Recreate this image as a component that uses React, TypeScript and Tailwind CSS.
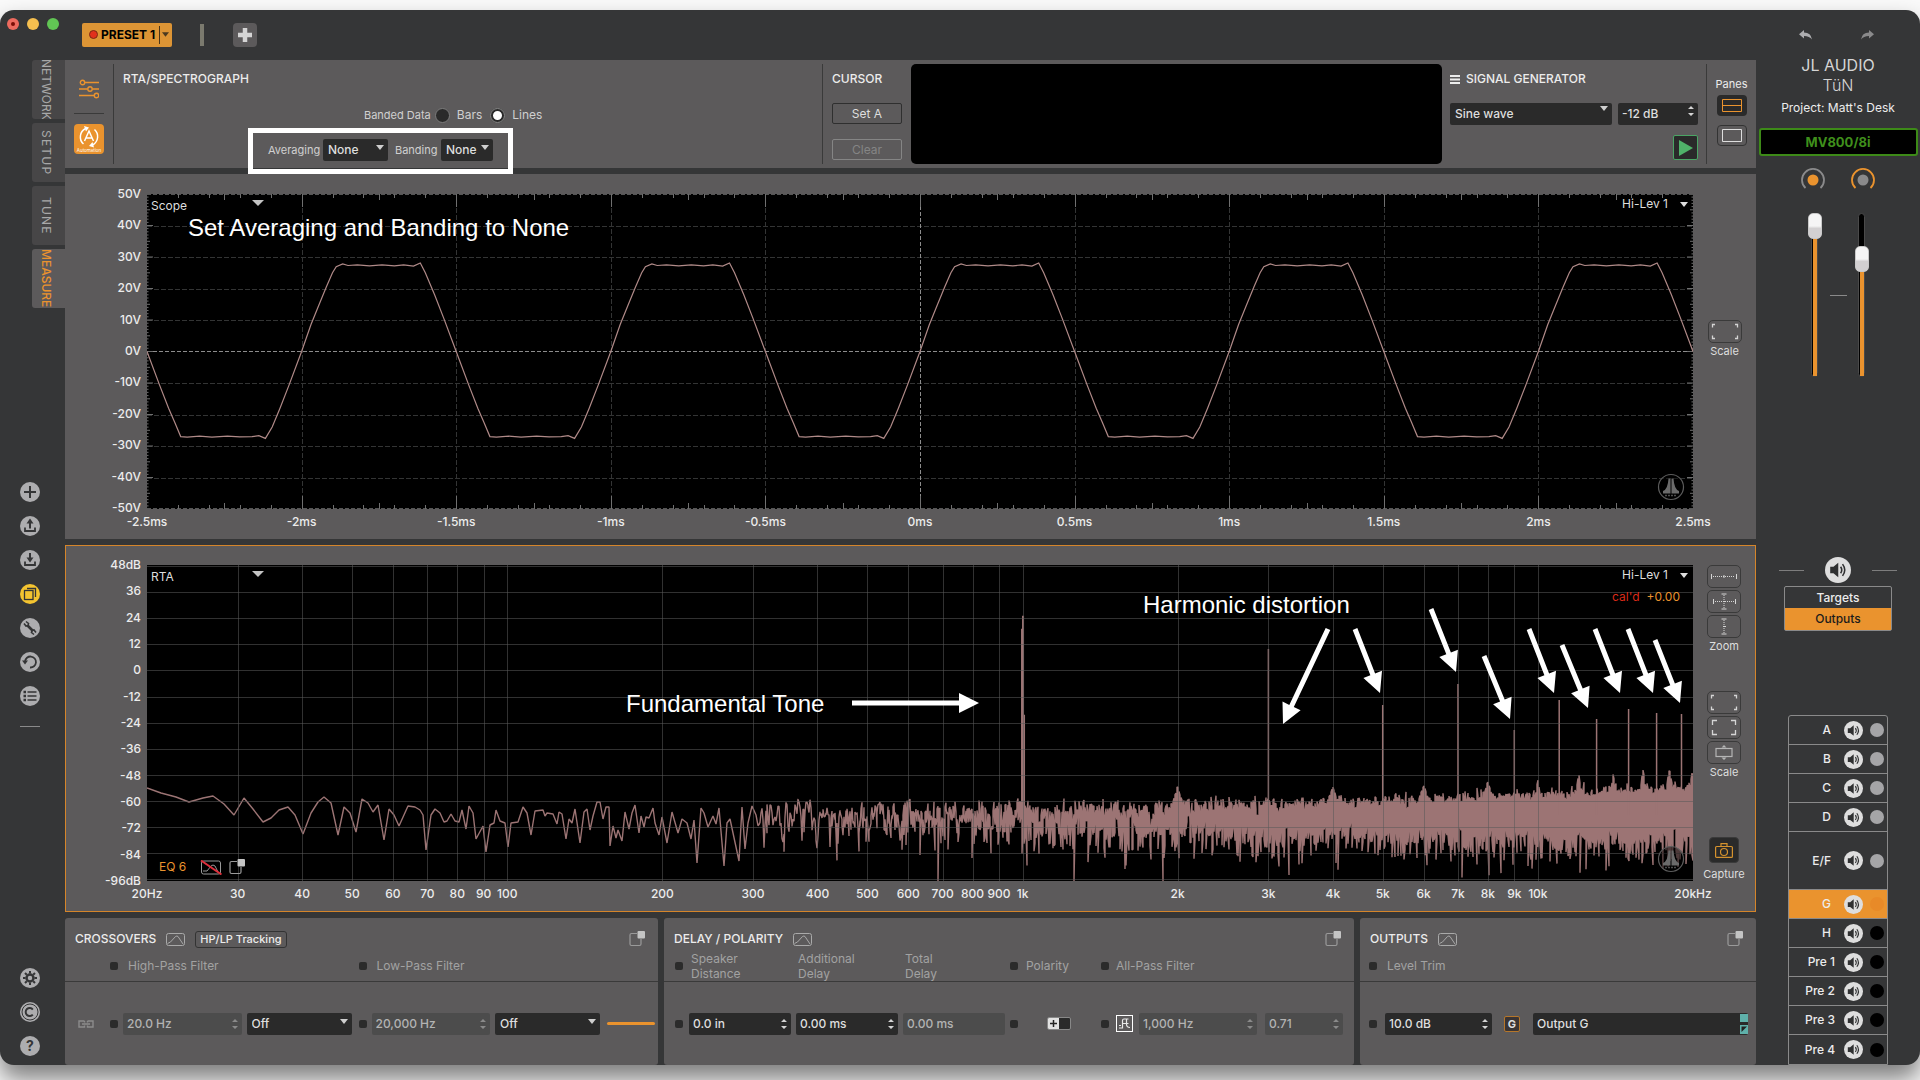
import React from "react";
import type { ReactNode } from "react";

const PINK = "#9c7474";

/* ---------- signal data ---------- */

const SCOPE_W = 1546;
const SCOPE_H = 315;
const RTA_W = 1546;
const RTA_H = 316;

const scopeX = (ms: number) => ((ms + 2.5) / 5) * SCOPE_W;
const scopeY = (v: number) => ((50 - v) / 100) * SCOPE_H;
const freqX = (f: number) => (Math.log10(f / 20) / 3) * RTA_W;
const dbY = (db: number) => 1 + ((48 - db) / 12) * 26.1;

const CYCLE: [number, number][] = [
  [0, 0], [0.03, 8.5], [0.055, 14.5], [0.08, 20.5], [0.1, 25], [0.112, 26.9], [0.133, 27.8], [0.15, 27.3],
  [0.18, 27.5], [0.22, 27.2], [0.26, 27.5], [0.3, 27.2], [0.33, 27.5], [0.362, 27.1], [0.384, 28.1],
  [0.4, 25], [0.43, 18], [0.46, 10.5], [0.5, 0], [0.54, -10.5], [0.57, -18], [0.59, -22.5], [0.609, -27],
  [0.63, -27.2], [0.67, -26.9], [0.71, -27.2], [0.76, -26.9], [0.8, -27.1], [0.84, -27], [0.862, -26.7],
  [0.883, -27.6], [0.905, -24], [0.93, -18], [0.96, -10.5],
];

function scopePath() {
  const pts: string[] = [];
  for (let c = -3; c <= 2; c++) {
    for (const [t, v] of CYCLE) {
      const ms = c + t;
      if (ms < -2.501 || ms > 2.501) continue;
      pts.push(`${scopeX(ms).toFixed(1)},${scopeY(v).toFixed(1)}`);
    }
  }
  return "M" + pts.join("L");
}

const LOW_TRACE: [number, number][] = [
  [0, 223], [14, 228], [29, 232], [42, 237], [56, 233], [66, 231], [77, 239], [87, 250], [97, 233], [106, 244],
  [116, 257], [124, 253], [132, 245], [141, 242], [148, 250], [156, 269], [164, 248], [171, 237], [177, 232],
  [184, 238], [191, 270], [197, 242], [203, 248], [209, 267], [215, 234], [221, 238], [226, 247], [231, 240],
  [237, 275], [242, 244], [247, 250], [252, 261], [261, 241], [268, 242], [273, 245], [276, 250], [279, 285],
  [284, 250], [288, 244], [293, 248], [297, 257], [300, 256], [304, 249], [308, 256], [312, 257], [315, 245],
  [319, 264], [322, 241], [326, 248], [329, 274], [336, 261], [339, 287], [343, 260], [347, 258], [349, 245],
  [353, 256], [358, 258], [361, 282], [364, 258], [371, 257], [376, 242], [380, 248], [384, 270], [388, 246],
  [396, 245], [398, 251], [400, 248], [406, 249], [410, 259], [412, 247], [415, 249], [419, 274], [422, 254],
  [425, 258], [428, 244], [433, 278], [437, 247], [440, 244], [443, 265], [446, 251], [450, 237], [453, 237],
  [456, 254], [459, 242], [462, 242], [463, 281], [466, 261], [469, 273], [471, 265], [475, 276], [478, 247],
  [482, 264], [485, 248], [488, 240], [492, 268], [494, 251], [497, 262], [499, 252], [502, 253], [506, 243],
  [508, 258], [512, 270], [515, 252], [520, 278], [525, 247], [531, 268], [535, 254], [540, 258], [544, 274],
  [547, 255], [550, 298], [554, 243], [557, 248], [561, 262], [566, 251], [569, 259], [572, 243], [577, 301],
  [580, 258], [583, 254], [586, 268], [592, 296], [595, 242], [598, 284], [601, 258], [605, 241], [609, 250],
];

const SPIKES: [number, number][] = [
  [3000, 84], [5000, 140], [7000, 119], [9000, 165], [11000, 135],
  [13000, 154], [15000, 144], [17000, 148], [19000, 149],
];
const BUMPS: [number, number][] = [
  [1000, 232], [2000, 220], [3000, 231], [4000, 219], [5000, 232], [6000, 218], [7000, 228], [8000, 215], [9000, 226],
  [10000, 213], [12000, 207], [14000, 207], [16000, 203], [18000, 200], [19950, 204],
];

function rtaPath() {
  let state = 90125;
  const rnd = () => {
    state = (state + 0x6d2b79f5) | 0;
    let t = Math.imul(state ^ (state >>> 15), 1 | state);
    t = (t + Math.imul(t ^ (t >>> 7), 61 | t)) ^ t;
    return (((t ^ (t >>> 14)) >>> 0) + 1) / 4294967297;
  };
  const gauss = () => Math.sqrt(-2 * Math.log(rnd())) * Math.cos(2 * Math.PI * rnd());
  // Neighbouring bins overlap through the analysis window, so each level mixes three of them.
  const re = [gauss(), gauss(), gauss()];
  const im = [gauss(), gauss(), gauss()];
  const power = () => {
    re.shift();
    im.shift();
    re.push(gauss());
    im.push(gauss());
    const r = re[1] - (re[0] + re[2]) / 2;
    const i = im[1] - (im[0] + im[2]) / 2;
    return (r * r + i * i) / 3;
  };
  let d = "M" + LOW_TRACE.map(([x, y]) => `${x},${y}`).join("L");
  const step = 1.4;
  let f = 20 * Math.pow(10, (611 / RTA_W) * 3);
  for (let x = 611; x <= RTA_W; x++) {
    const fEnd = 20 * Math.pow(10, ((x + 1) / RTA_W) * 3);
    const mean = 251 - 15 * Math.pow(fEnd / 20000, 0.8);
    let top = 999;
    let bottom = 0;
    while (f < fEnd) {
      const y = mean - 2.175 * 10 * Math.log10(power() + 0.0005);
      top = Math.min(top, y);
      bottom = Math.max(bottom, y);
      f += step;
    }
    if (top > bottom) continue;
    for (const [bf, by] of BUMPS) {
      const dx = Math.abs(x - freqX(bf));
      const half = bf > 9000 ? 4 : bf > 5000 ? 5 : 7;
      if (dx < half) top = Math.min(top, by + dx * (bf > 9000 ? 7 : 3.2) + rnd() * 3);
    }
    const a = Math.max(200, top).toFixed(1);
    const b = Math.min(RTA_H, bottom).toFixed(1);
    d += x % 2 ? `L${x},${a}L${x},${b}` : `L${x},${b}L${x},${a}`;
  }
  return d;
}

const SCOPE_PATH = scopePath();
const RTA_PATH = rtaPath();

const V_LABELS = ["50V", "40V", "30V", "20V", "10V", "0V", "-10V", "-20V", "-30V", "-40V", "-50V"];
const DB_LABELS = ["48dB", "36", "24", "12", "0", "-12", "-24", "-36", "-48", "-60", "-72", "-84", "-96dB"];
const MS_LABELS: [string, number][] = [
  ["-2.5ms", -2.5], ["-2ms", -2], ["-1.5ms", -1.5], ["-1ms", -1], ["-0.5ms", -0.5], ["0ms", 0],
  ["0.5ms", 0.5], ["1ms", 1], ["1.5ms", 1.5], ["2ms", 2], ["2.5ms", 2.5],
];
const HZ_LABELS: [string, number][] = [
  ["20Hz", 20], ["30", 30], ["40", 40], ["50", 50], ["60", 60], ["70", 70], ["80", 80], ["90", 90], ["100", 100],
  ["200", 200], ["300", 300], ["400", 400], ["500", 500], ["600", 600], ["700", 700], ["800", 800], ["900", 900],
  ["1k", 1000], ["2k", 2000], ["3k", 3000], ["4k", 4000], ["5k", 5000], ["6k", 6000], ["7k", 7000], ["8k", 8000],
  ["9k", 9000], ["10k", 10000], ["20kHz", 20000],
];
const ARROWS: [number, number, number, number][] = [
  [705, 138, 832, 138], [1181, 64, 1136, 159], [1208, 64, 1233, 128], [1284, 44, 1309, 107], [1337, 91, 1363, 154],
  [1382, 64, 1407, 128], [1415, 80, 1441, 143], [1448, 64, 1473, 128], [1481, 64, 1506, 128], [1508, 75, 1533, 138],
];

/* ---------- small parts ---------- */

function Caret({ className = "" }: { className?: string }) {
  return (
    <svg viewBox="0 0 8 5" className={`h-[5px] w-2 ${className}`} aria-hidden="true">
      <path d="M0 0h8L4 5z" fill="currentColor" />
    </svg>
  );
}

function Select({ label, value, className }: { label: string; value: string; className: string }) {
  return (
    <span className={`relative block h-[22px] ${className}`}>
      <select
        aria-label={label}
        defaultValue={value}
        className="h-full w-full appearance-none rounded-[2px] bg-[#2a2a2a] pl-[5px] text-xs font-medium text-[#dedede] outline-none"
      >
        <option>{value}</option>
      </select>
      <Caret className="pointer-events-none absolute right-1 top-1.5 text-[#cfcfcf]" />
    </span>
  );
}

function Spin({ label, value, className, disabled = false, plain = false }: {
  label: string; value: string; className: string; disabled?: boolean; plain?: boolean;
}) {
  return (
    <span className={`relative block h-[22px] ${className}`}>
      <input
        aria-label={label}
        defaultValue={value}
        disabled={disabled}
        className={`h-full w-full rounded-[2px] pl-1 text-xs font-medium outline-none ${
          disabled ? "bg-[#4c4c4c] text-[#b3b3b3]" : "bg-[#2a2a2a] text-[#dedede]"
        }`}
      />
      {!plain && (
        <svg viewBox="0 0 6 12" className={`pointer-events-none absolute right-1 top-[5px] h-3 w-1.5 ${disabled ? "text-[#8a8a8a]" : "text-[#d5d5d5]"}`} aria-hidden="true">
          <path d="M0 4h6L3 1zM0 8h6l-3 3z" fill="currentColor" />
        </svg>
      )}
    </span>
  );
}

const Dot = () => <span className="block size-2 rounded-[2px] bg-[#2b2b2b]" />;

function CurveIcon() {
  return (
    <svg viewBox="0 0 19 13" className="h-[13px] w-[19px]" fill="none" stroke="#a9a9a9" aria-hidden="true">
      <rect x="0.5" y="0.5" width="18" height="12" rx="2" />
      <path d="M1.5 10.500l3-1.500L9.500 3.500q1.500-1 2.500 0l5 7.500" />
    </svg>
  );
}

function PopOut() {
  return (
    <svg viewBox="0 0 16 16" className="size-4" aria-hidden="true">
      <path d="M8 2.500H2.500q-1.500 0-1.500 1.500v9q0 1.500 1.500 1.500h8q1.500 0 1.500-1.500V8" fill="none" stroke="#9a9a9a" strokeWidth="1.200" />
      <rect x="8.500" width="7.500" height="7.500" rx="1" fill="#c4c4c4" />
    </svg>
  );
}

function Speaker({ className }: { className: string }) {
  return (
    <svg viewBox="0 0 20 20" className={className} aria-hidden="true">
      <circle cx="10" cy="10" r="10" fill="#dedede" />
      <path d="M4 7.500h2.500L10.200 4.500v11L6.500 12.500H4z" fill="#2f3031" />
      <path d="M12 7.500q1.800 2.500 0 5M13.500 5.500q3.400 4.500 0 9" fill="none" stroke="#2f3031" strokeWidth="1.200" />
    </svg>
  );
}

function Watermark({ className }: { className: string }) {
  return (
    <svg viewBox="0 0 28 28" className={`absolute size-7 ${className}`} aria-hidden="true">
      <circle cx="14" cy="14" r="12.500" fill="#000" fillOpacity=".5" stroke="#5c5c5c" strokeWidth="1.200" />
      <path d="M11.500 5.500h2v15H6v-2.500q4.800-1.500 5.500-12.500zM14.500 5.500h2q.7 11 5.500 12.500v2.500h-7.500z" fill="#6b6b6b" />
      <path d="M8 22.500h12" stroke="#4d4d4d" strokeWidth="1.500" strokeDasharray="2 1" />
    </svg>
  );
}

function SideButton({ label, children }: { label: string; children: ReactNode }) {
  return (
    <button aria-label={label} className="flex h-[23px] w-[34px] items-center justify-center rounded-[5px] border border-[#3a3a3a] text-[#d5d5d5]">
      {children}
    </button>
  );
}

function Corners({ d }: { d: string }) {
  return (
    <svg viewBox="0 0 28 17" className="h-[17px] w-7" fill="none" stroke="currentColor" strokeWidth="1.300" aria-hidden="true">
      <path d={d} />
    </svg>
  );
}
const WIDE_CORNERS = "M4 1.500H1.500V4.500M24 1.500h2.500V4.500M4 15.500H1.500V12.500M24 15.500h2.500V12.500";
const TALL_CORNERS = "M7 1.500H2.500V6M21 1.500h4.500V6M7 15.500H2.500V11M21 15.500h4.500V11";

function XLabels({ items, place }: { items: [string, number][]; place: (n: number) => number }) {
  return (
    <div className="relative h-4">
      {items.map(([text, n]) => (
        <span key={text} className="absolute top-0 -translate-x-1/2 text-xs font-medium leading-4 text-[#ececec]" style={{ left: `${place(n) / 15.46}%` }}>
          {text}
        </span>
      ))}
    </div>
  );
}

function YLabels({ items }: { items: string[] }) {
  return (
    <div className="-mb-[7px] -mt-2 flex shrink-0 flex-col justify-between pr-1.5 text-right text-xs font-medium leading-4 text-[#ececec]">
      {items.map((t) => (
        <span key={t}>{t}</span>
      ))}
    </div>
  );
}

/* ---------- plots ---------- */

function ScopePlot() {
  const v = [-2, -1.5, -1, -0.5, 0.5, 1, 1.5, 2];
  let minor = "";
  for (let i = 1; i < 50; i++) {
    const x = scopeX(-2.5 + i / 10).toFixed(0);
    minor += `M${x}.5,0v4M${x}.5,${SCOPE_H}v-4`;
  }
  for (let i = 1; i < 20; i++) {
    const x = scopeX(-2.5 + i / 4).toFixed(0);
    const l = i % 2 ? 6 : 13;
    minor += `M${x}.5,0v${l}M${x}.5,${SCOPE_H}v${-l}`;
  }
  for (let i = 1; i < 100; i++) {
    const y = ((i * SCOPE_H) / 100).toFixed(1);
    const l = i % 10 === 0 ? 6 : i % 5 === 0 ? 3 : 1.5;
    minor += `M0,${y}h${l}M${SCOPE_W},${y}h${-l}`;
  }
  return (
    <svg viewBox={`0 0 ${SCOPE_W} ${SCOPE_H}`} preserveAspectRatio="none" className="block h-full w-full bg-black" role="img" aria-label="Oscilloscope trace">
      <g stroke="#333434" strokeDasharray="5 2">
        {v.map((t) => (
          <path key={t} d={`M${Math.round(scopeX(t))}.5,0V${SCOPE_H}`} />
        ))}
        {[40, 30, 20, 10, -10, -20, -30, -40].map((n) => (
          <path key={n} d={`M0,${Math.round(scopeY(n))}.5H${SCOPE_W}`} />
        ))}
      </g>
      <path d={`M0,157.500H${SCOPE_W}M773.500,0V${SCOPE_H}`} stroke="#8c8c8c" strokeDasharray="4 2" />
      <path d={`M0,.5H${SCOPE_W}M0,314.500H${SCOPE_W}`} stroke="#555" strokeDasharray="4 2" />
      <path d={minor} stroke="#6f6f6f" />
      <path d={SCOPE_PATH} fill="none" stroke="#b08a88" strokeWidth="1.200" />
    </svg>
  );
}

function arrowPoints([x1, y1, x2, y2]: [number, number, number, number]) {
  const len = Math.hypot(x2 - x1, y2 - y1);
  const ux = (x2 - x1) / len;
  const uy = (y2 - y1) / len;
  const at = (along: number, side: number) =>
    `${(x1 + ux * along - uy * side).toFixed(1)},${(y1 + uy * along + ux * side).toFixed(1)}`;
  const neck = len - 20;
  return [at(0, -2.5), at(neck, -2.5), at(neck, -10), at(len, 0), at(neck, 10), at(neck, 2.5), at(0, 2.5)].join(" ");
}

function RtaPlot() {
  return (
    <svg viewBox={`0 0 ${RTA_W} ${RTA_H}`} preserveAspectRatio="none" className="block h-full w-full bg-black" role="img" aria-label="Real time analyzer spectrum">
      <path d={RTA_PATH} fill="none" stroke={PINK} strokeWidth="1.400" strokeLinejoin="bevel" />
      {SPIKES.map(([f, y]) => (
        <path key={f} d={`M${freqX(f).toFixed(1)},${y}V250`} stroke={PINK} strokeWidth="1.500" />
      ))}
      <path d={`M${freqX(1000) - 1},250V64h1V51h1V150h1V250z`} fill={PINK} stroke={PINK} />
      <g stroke="#5a5a5a" strokeOpacity=".55">
        {DB_LABELS.map((t, i) => (
          <path key={t} d={`M0,${Math.round(dbY(48 - i * 12))}.5H${RTA_W}`} />
        ))}
        {HZ_LABELS.slice(1, -1).map(([t, f]) => (
          <path key={t} d={`M${Math.round(freqX(f))}.5,0V${RTA_H}`} />
        ))}
      </g>
      {ARROWS.map((a) => (
        <polygon key={a.join()} points={arrowPoints(a)} fill="#fff" />
      ))}
    </svg>
  );
}

/* ---------- left side ---------- */

const RAIL: { name: string; yellow?: boolean; art: ReactNode }[] = [
  { name: "Add", art: <path d="M10 4v12M4 10h12" strokeWidth="2" /> },
  { name: "Export", art: <><path d="M5 11.500V15h10v-3.500" strokeWidth="1.800" /><path d="M10 12.500V7" strokeWidth="2" /><path d="M10 2.500l3.500 5h-7z" fill="currentColor" stroke="none" /></> },
  { name: "Import", art: <><path d="M5 11.500V15h10v-3.500" strokeWidth="1.800" /><path d="M10 3v6" strokeWidth="2" /><path d="M10 12.500l3.500-5h-7z" fill="currentColor" stroke="none" /></> },
  { name: "Duplicate", yellow: true, art: <><rect x="4.500" y="6.500" width="8.500" height="9" strokeWidth="1.300" /><path d="M7 4.500h8.500V13" strokeWidth="1.300" /></> },
  { name: "Tools", art: <><path d="M7.500 7.500l5.500 5.500" strokeWidth="2.600" /><path d="M4 5.500l2 2.500 2-.5.500-2L6 3.500M16 14.500l-2-2.500-2 .5-.5 2 2.500 2" strokeWidth="1.600" /></> },
  { name: "Revert", art: <><path d="M5 9.500a5.500 5.500 0 1 1 5 6" strokeWidth="1.800" /><path d="M2 8.500h6l-3 4z" fill="currentColor" stroke="none" /></> },
  { name: "List", art: <><path d="M7.500 6h9M7.500 10h9M7.500 14h9" strokeWidth="1.500" /><path d="M3.500 6h2.500M3.500 10h2.500M3.500 14h2.500" strokeWidth="2.500" /></> },
];

function RoundButton({ name, yellow, children }: { name: string; yellow?: boolean; children: ReactNode }) {
  return (
    <button aria-label={name} className="block size-5">
      <svg viewBox="0 0 20 20" className="size-5 text-[#343536]" fill="none" stroke="currentColor" aria-hidden="true">
        <circle cx="10" cy="10" r="10" fill={yellow ? "#f4c430" : "#adadaf"} stroke="none" />
        {children}
      </svg>
    </button>
  );
}

function LeftRail() {
  const tabs = ["NETWORK", "SETUP", "TUNE", "MEASURE"];
  return (
    <aside className="flex w-[65px] shrink-0 flex-col pb-[9px]">
      <nav className="ml-8 flex flex-col gap-1">
        {tabs.map((t) => {
          const on = t === "MEASURE";
          return (
            <button
              key={t}
              className={`flex h-[59px] items-center justify-center overflow-hidden rounded-l-[3px] pr-1.5 text-xs ${
                on ? "bg-[#5c5a5b] font-medium text-[#ea932e]" : "bg-[#474647] text-[#a8a8a8]"
              } ${t === "SETUP" || t === "TUNE" ? "tracking-widest" : ""}`}
            >
              <span className="leading-4 [writing-mode:vertical-rl]">{t}</span>
            </button>
          );
        })}
      </nav>
      <div className="mt-[174px] flex flex-col gap-3.5 pl-5">
        {RAIL.map((r) => (
          <RoundButton key={r.name} name={r.name} yellow={r.yellow}>{r.art}</RoundButton>
        ))}
      </div>
      <hr className="ml-5 mt-5 w-5 border-[#8a8a8a]" />
      <div className="mt-auto flex flex-col gap-3.5 pl-5">
        <RoundButton name="Settings">
          <circle cx="10" cy="10" r="3.500" strokeWidth="2.500" />
          <path d="M10 3v2.500M10 14.500V17M3 10h2.500M14.500 10H17M5 5l1.800 1.800M13.200 13.200L15 15M15 5l-1.800 1.800M6.800 13.200L5 15" strokeWidth="2" />
        </RoundButton>
        <RoundButton name="Copyright">
          <circle cx="10" cy="10" r="8" strokeWidth="1" />
          <path d="M12.800 7.500a4 4 0 1 0 0 5" strokeWidth="2" />
        </RoundButton>
        <button aria-label="Help" className="size-5 rounded-full bg-[#adadaf] text-sm font-bold leading-5 text-[#343536]">?</button>
      </div>
    </aside>
  );
}

/* ---------- top panel ---------- */

function TopPanel() {
  return (
    <section className="relative flex min-h-[108px] bg-[#5c5a5b] py-1 text-[#ececec]">
      <div className="flex w-[49px] shrink-0 flex-col items-center border-r border-[#3a3a3a]">
        <button aria-label="Controls" className="mt-[15px] size-5 text-[#ea932e]">
          <svg viewBox="0 0 20 20" fill="none" stroke="currentColor" strokeWidth="1.400" aria-hidden="true">
            <circle cx="3.500" cy="3.500" r="2.200" /><path d="M6 3.500h14M0 10h8.500M13.500 10H20M0 16.500h15" />
            <circle cx="11" cy="10" r="2.200" /><circle cx="17.500" cy="16.500" r="2.200" />
          </svg>
        </button>
        <hr className="mt-3.5 w-[30px] border-[#3a3a3a]" />
        <button aria-label="Automation" className="mt-2.5 h-[30px] w-[30px] rounded-[4px] bg-[#ea932e]">
          <svg viewBox="0 0 30 30" fill="none" stroke="#fff" strokeWidth="1.500" aria-hidden="true">
            <path d="M9.500 20a9.500 9.500 0 0 1 2-15.500M20.500 5.500a9.500 9.500 0 0 1-2 15.500" />
            <path d="M10 2l5 1.500-3 4zM20 23.500l-5-1.500 3.500-4z" fill="#fff" stroke="none" />
            <path d="M10.500 17L15 7l4.500 10M12 14h6" />
            <text x="15" y="27.500" textAnchor="middle" fontSize="4.500" fill="#fff" stroke="none">Automation</text>
          </svg>
        </button>
      </div>
      <div className="relative min-w-0 flex-1 border-r border-[#3a3a3a] pl-[9px]">
        <h2 className="pt-[7px] text-xs font-medium leading-4">RTA/SPECTROGRAPH</h2>
        <fieldset className="ml-[241px] mt-5 flex h-4 items-center text-xs text-[#d0d0d0]">
          <span className="mr-1 text-[11px]">Banded Data</span>
          <label className="mr-2 flex items-center gap-[7px]">
            <input type="radio" name="banded" className="size-[15px] appearance-none rounded-full border border-[#7b7b7b] bg-[#2a2a2a]" />Bars
          </label>
          <label className="flex items-center gap-[7px]">
            <input type="radio" name="banded" defaultChecked className="size-[15px] appearance-none rounded-full border-3 border-[#2a2a2a] bg-white outline outline-[#8a8a8a] -outline-offset-1" />Lines
          </label>
        </fieldset>
        <div className="ml-[145px] mt-4 flex items-center text-[11px] leading-4 text-[#d0d0d0]">
          <span className="w-[55px]">Averaging</span>
          <Select label="Averaging" value="None" className="w-[65px]" />
          <span className="ml-[7px] w-[46px]">Banding</span>
          <Select label="Banding" value="None" className="w-[52px]" />
        </div>
      </div>
      <div className="flex w-[88px] shrink-0 flex-col pl-[9px] pt-[7px]">
        <h2 className="text-xs font-medium leading-4">CURSOR</h2>
        <button className="mt-4 h-[21px] w-[70px] rounded-[2px] border border-[#2f2f2f] text-xs text-[#dedede]">Set A</button>
        <button disabled className="mt-[15px] h-[21px] w-[70px] rounded-[2px] border border-[#858585] text-xs text-[#858585]">Clear</button>
      </div>
      <div className="w-[531px] shrink-0 rounded-[5px] bg-black" />
      <div className="flex w-[265px] shrink-0 flex-col border-r border-[#3a3a3a] pl-2 pr-2 pt-[7px]">
        <h2 className="flex items-center gap-1.5 text-xs font-medium leading-4">
          <svg viewBox="0 0 10 9" className="h-[9px] w-2.5" aria-hidden="true"><path d="M0 1h10M0 4.500h10M0 8h10" stroke="currentColor" strokeWidth="1.800" /></svg>
          SIGNAL GENERATOR
        </h2>
        <div className="mt-[13px] flex gap-1.5">
          <Select label="Signal type" value="Sine wave" className="flex-1" />
          <Spin label="Signal level" value="-12 dB" className="w-20" />
        </div>
        <button aria-label="Play" className="mt-[13px] flex size-[25px] items-center justify-center self-end rounded-[2px] border border-[#4aa564] bg-[#2a2a2a]">
          <svg viewBox="0 0 14 16" className="h-4 w-3.5" aria-hidden="true"><path d="M0 0l14 8L0 16z" fill="#4fb269" /></svg>
        </button>
      </div>
      <div className="flex w-[49px] shrink-0 flex-col items-center pt-3">
        <span className="text-[11px] leading-4">Panes</span>
        <button aria-label="Two panes" className="mt-[3px] flex h-[21px] w-[30px] items-center justify-center rounded-[4px] bg-[#2a2a2a]">
          <svg viewBox="0 0 20 13" className="h-[13px] w-5" fill="none" stroke="#ea932e" aria-hidden="true"><path d="M.5.5h19v12H.5zM.5 6.500h19" /></svg>
        </button>
        <button aria-label="One pane" className="mt-[9px] flex h-[21px] w-[30px] items-center justify-center rounded-[4px] border border-[#333]">
          <svg viewBox="0 0 20 13" className="h-[13px] w-5 shrink-0" fill="none" stroke="#dedede" aria-hidden="true"><path d="M.5.5h19v12H.5z" /></svg>
        </button>
      </div>
      <div className="pointer-events-none absolute left-[183px] top-[68px] z-10 h-[46px] w-[265px] border-[5px] border-white" />
    </section>
  );
}

/* ---------- plot panels ---------- */

function Note({ className, children }: { className: string; children: ReactNode }) {
  return <p className={`absolute whitespace-nowrap text-2xl leading-7 text-white [font-family:'Liberation_Sans',sans-serif] ${className}`}>{children}</p>;
}

function PlotTags({ name }: { name: string }) {
  return (
    <>
      <span className="absolute left-1 top-1 text-xs leading-4 text-[#dedede]">{name}</span>
      <button aria-label={`${name} options`} className="absolute left-[105px] top-1.5 flex text-[#c4c4c4]">
        <svg viewBox="0 0 12 6" className="h-1.5 w-3" aria-hidden="true"><path d="M0 0h12L6 6z" fill="currentColor" /></svg>
      </button>
      <button className="absolute right-1 top-0.5 flex items-center gap-[11px] text-xs leading-4 text-[#dedede]">
        Hi-Lev 1
        <Caret className="w-2.5" />
      </button>
    </>
  );
}

function ScopePanel() {
  return (
    <section className="bg-[#5c5a5b] pb-[9px] pt-5">
      <div className="flex">
        <div className="flex w-[82px] shrink-0 justify-end"><YLabels items={V_LABELS} /></div>
        <div className="relative h-[315px] min-w-0 flex-1">
          <ScopePlot />
          <PlotTags name="Scope" />
          <Note className="left-[41px] top-5">Set Averaging and Banding to None</Note>
          <Watermark className="bottom-2 right-2" />
        </div>
        <div className="flex w-[63px] shrink-0 flex-col items-center justify-center pb-6 text-[11px] leading-4 text-[#dedede]">
          <SideButton label="Scale to fit"><Corners d={WIDE_CORNERS} /></SideButton>
          Scale
        </div>
      </div>
      <div className="ml-[82px] mr-[63px] mt-[5px]"><XLabels items={MS_LABELS} place={scopeX} /></div>
    </section>
  );
}

function RtaPanel() {
  return (
    <section className="border border-[#d5852a] bg-[#5c5a5b] pb-[9px] pt-[19px]">
      <div className="flex">
        <div className="flex w-[81px] shrink-0 justify-end"><YLabels items={DB_LABELS} /></div>
        <div className="relative h-[316px] min-w-0 flex-1">
          <RtaPlot />
          <PlotTags name="RTA" />
          <p className="absolute right-[13px] top-6 flex gap-[7px] text-xs leading-4">
            <span className="text-[#dc2a18]">cal'd</span>
            <span className="text-[#ea932e]">+0.00</span>
          </p>
          <Note className="left-[479px] top-[125px]">Fundamental Tone</Note>
          <Note className="left-[996px] top-[26px]">Harmonic distortion</Note>
          <div className="absolute bottom-1.5 left-3 flex items-center text-xs leading-4 text-[#ea932e]">
            <span className="mr-3.5">EQ 6</span>
            <svg viewBox="0 0 22 15" className="mr-[7px] h-[15px] w-[22px]" fill="none" aria-hidden="true">
              <rect x="1.500" y="1" width="19" height="13" rx="2" stroke="#999" />
              <path d="M3 11h4l4-5q2-2 4 0l3 6" stroke="#999" />
              <path d="M1 .5l20.500 14" stroke="#e02f3c" strokeWidth="2" />
            </svg>
            <PopOut />
          </div>
          <Watermark className="bottom-2 right-2" />
        </div>
        <div className="flex w-[62px] shrink-0 flex-col items-center text-[11px] leading-4 text-[#dedede]">
          <div className="flex flex-col gap-0.5">
            <SideButton label="Zoom horizontal">
              <svg viewBox="0 0 28 17" className="h-[17px] w-7" stroke="currentColor" aria-hidden="true"><path d="M1.500 6v5M26.500 6v5M14 7v3" /><path d="M3 8.500h22" strokeDasharray="1 1" /></svg>
            </SideButton>
            <SideButton label="Zoom both">
              <svg viewBox="0 0 28 17" className="h-[17px] w-7" stroke="currentColor" aria-hidden="true"><path d="M3.500 6v5M25.500 6v5M11.500 1h5M11.500 16h5M13 8.500h3" /><path d="M5 8.500h20M14 2v14" strokeDasharray="1 1" /></svg>
            </SideButton>
            <SideButton label="Zoom vertical">
              <svg viewBox="0 0 28 17" className="h-[17px] w-7" stroke="currentColor" aria-hidden="true"><path d="M11.500 1h5M11.500 16h5M13 8.500h3" /><path d="M14 2v14" strokeDasharray="1 1" /></svg>
            </SideButton>
          </div>
          <span>Zoom</span>
          <div className="mt-[37px] flex flex-col gap-0.5">
            <SideButton label="Scale wide"><Corners d={WIDE_CORNERS} /></SideButton>
            <SideButton label="Scale tall"><Corners d={TALL_CORNERS} /></SideButton>
            <SideButton label="Scale vertical">
              <svg viewBox="0 0 20 15" className="h-[15px] w-5" aria-hidden="true"><rect x="2" y="3.500" width="16" height="8" fill="none" stroke="#b5b5b5" strokeWidth="1.200" /><path d="M10 0l2.500 2.500h-5zM10 15l2.500-2.500h-5z" fill="#b5b5b5" /></svg>
            </SideButton>
          </div>
          <span>Scale</span>
          <button aria-label="Capture" className="mt-[57px] flex h-[26px] w-[30px] items-center justify-center rounded-[4px] border border-[#3a3a3a] bg-[#2a2a2a]">
            <svg viewBox="0 0 18 15" className="h-[15px] w-[18px]" fill="none" stroke="#d5922e" strokeWidth="1.200" aria-hidden="true">
              <rect x=".6" y="3.500" width="16.800" height="10.900" rx="1" /><path d="M6 3V.7h6V3" /><circle cx="9" cy="9" r="3.500" />
            </svg>
          </button>
          <span className="mt-[3px]">Capture</span>
        </div>
      </div>
      <div className="ml-[81px] mr-[62px] mt-1"><XLabels items={HZ_LABELS} place={freqX} /></div>
    </section>
  );
}

/* ---------- bottom panels ---------- */

function BottomPanel({ title, extra, labels, children }: { title: string; extra?: ReactNode; labels: ReactNode; children: ReactNode }) {
  return (
    <section className="flex min-w-0 flex-col rounded-[3px] bg-[#5c5a5b] text-xs">
      <header className="flex h-8 items-center gap-2.5 pl-2.5 pr-[13px] pt-2.5">
        <h2 className="font-medium leading-4 text-[#ececec]">{title}</h2>
        <CurveIcon />
        {extra}
        <span className="ml-auto"><button aria-label={`Open ${title}`} className="block size-4"><PopOut /></button></span>
      </header>
      <div className="h-8 border-b border-[#3a3a3a] text-[#a2a2a2]">{labels}</div>
      <div className="h-[83px]">{children}</div>
    </section>
  );
}

const XGRID = "grid h-full grid-cols-[45px_13px_minmax(0,1fr)_13px_minmax(0,1fr)_51px] items-center";
const DGRID = "grid h-full grid-cols-[11px_14px_minmax(0,1fr)_minmax(0,1fr)_minmax(0,1fr)_16px_75px_15px_238px] items-center";

function BottomRow() {
  return (
    <div className="grid grid-cols-[593fr_690fr_396fr] gap-1.5">
      <BottomPanel
        title="CROSSOVERS"
        extra={<button className="h-[17px] rounded-[3px] border border-[#333] px-1 text-[11px] font-medium leading-[15px] text-[#ececec]">HP/LP Tracking</button>}
        labels={<div className={XGRID}><span /><Dot /><span className="pl-[5px]">High-Pass Filter</span><Dot /><span className="pl-[5px]">Low-Pass Filter</span></div>}
      >
        <div className={XGRID}>
          <svg viewBox="0 0 16 8" className="ml-[13px] h-2 w-4" fill="none" stroke="#8c8c8c" strokeWidth="1.400" aria-hidden="true"><path d="M6.500 1H1v6h5.500V5.500M9.500 1H15v6H9.500V5.500M9.500 1v1.500M6.500 1v1.500M4 4h8" /></svg>
          <Dot />
          <div className="flex gap-[5px] pr-[7px]">
            <Spin label="High-pass frequency" value="20.0 Hz" disabled className="min-w-0 flex-1" />
            <Select label="High-pass slope" value="Off" className="w-[105px]" />
          </div>
          <Dot />
          <div className="flex gap-[5px] pr-[7px]">
            <Spin label="Low-pass frequency" value="20,000 Hz" disabled className="min-w-0 flex-1" />
            <Select label="Low-pass slope" value="Off" className="w-[105px]" />
          </div>
          <span className="mr-[3px] h-[3px] rounded-full bg-[#ea932e]" />
        </div>
      </BottomPanel>
      <BottomPanel
        title="DELAY / POLARITY"
        labels={
          <div className={`${DGRID} leading-[15px]`}>
            <span /><Dot />
            <span className="pl-0.5">Speaker<br />Distance</span>
            <span className="pl-0.5">Additional<br />Delay</span>
            <span className="pl-0.5">Total<br />Delay</span>
            <Dot /><span>Polarity</span><Dot /><span>All-Pass Filter</span>
          </div>
        }
      >
        <div className={DGRID}>
          <span /><Dot />
          <Spin label="Speaker distance" value="0.0 in" className="mr-[5px]" />
          <Spin label="Additional delay" value="0.00 ms" className="mr-[5px]" />
          <Spin label="Total delay" value="0.00 ms" disabled plain className="mr-[5px]" />
          <Dot />
          <button aria-label="Polarity positive" className="ml-[21px] flex h-[13px] w-6 overflow-hidden rounded-[2px] border border-[#888] bg-[#2a2a2a]">
            <svg viewBox="0 0 11 11" className="size-[11px] bg-[#e2e2e2]" aria-hidden="true"><path d="M5.500 2v7M2 5.500h7" stroke="#222" strokeWidth="1.500" /></svg>
          </button>
          <Dot />
          <div className="flex items-center pr-[11px]">
            <button aria-label="All-pass shape" className="size-[17px] shrink-0 border border-white">
              <svg viewBox="0 0 15 15" fill="none" stroke="#e8e8e8" strokeWidth="1.200" aria-hidden="true"><path d="M2 12h3.500V4.500Q5.500 3 7 3h4.500M2 9.500h2M6 7.500h5.500M9.500 3v5q0 3.500 3.500 3.500" /></svg>
            </button>
            <Spin label="All-pass frequency" value="1,000 Hz" disabled className="ml-1.5 min-w-0 flex-1" />
            <Spin label="All-pass Q" value="0.71" disabled className="ml-2 w-[78px]" />
          </div>
        </div>
      </BottomPanel>
      <BottomPanel title="OUTPUTS" labels={<div className="flex h-full items-center gap-2.5 pl-[9px]"><Dot />Level Trim</div>}>
        <div className="flex h-full items-center pl-[9px] pr-2">
          <Dot />
          <Spin label="Level trim" value="10.0 dB" className="ml-2 w-[107px]" />
          <span className="ml-3 mr-[13px] h-4 w-4 rounded-[2px] border border-[#b5762a] bg-[#3a3434] text-center text-[11px] font-bold leading-[14px] text-[#dedede]">G</span>
          <span className="relative min-w-0 flex-1">
            <Spin label="Output name" value="Output G" plain className="w-full" />
            <svg viewBox="0 0 8 20" className="absolute right-0 top-px h-5 w-2" aria-hidden="true"><path d="M0 0h8v8H0zM0 11h8v9H0z" fill="#5fb0aa" /><path d="M1.500 18v-5.500H7z" fill="#222" /></svg>
          </span>
        </div>
      </BottomPanel>
    </div>
  );
}

/* ---------- right side ---------- */

function Knob({ arc, dot }: { arc: string; dot: string }) {
  return (
    <svg viewBox="0 0 24 21" className="h-[21px] w-6" aria-hidden="true">
      <path d="M4.500 20a11 11 0 1 1 15 0" fill="none" stroke={arc} strokeWidth="1.800" />
      <circle cx="12" cy="12" r="5.500" fill={dot} />
    </svg>
  );
}

function Fader({ label, value }: { label: string; value: number }) {
  return (
    <div className="relative flex w-3.5 flex-col items-center">
      <div className="absolute inset-y-0 w-[7px] rounded-full border border-[#4a4a4a] bg-black" />
      <div className="absolute bottom-px w-1 bg-[#ea932e]" style={{ height: `${value - 3}%` }} />
      <div className="absolute h-[26px] w-3.5 rounded-[5px] border border-[#c9c9c9] bg-linear-to-b from-[#f5f5f5] from-50% to-[#d2d0d1] to-60%" style={{ top: `${100 - value}%` }} />
      <input type="range" aria-label={label} min={0} max={100} defaultValue={value} className="absolute inset-0 h-full w-full opacity-0 [writing-mode:vertical-lr]" />
    </div>
  );
}

const CHANNELS = ["A", "B", "C", "D", "E/F", "G", "H", "Pre 1", "Pre 2", "Pre 3", "Pre 4"];

function RightRail() {
  return (
    <aside className="flex w-[164px] shrink-0 flex-col items-center text-[#ececec]">
      <div className="mr-1 mt-5 flex w-[75px] justify-between">
        <button aria-label="Undo" className="text-[#adadaf]"><svg viewBox="0 0 13 10" className="h-2.5 w-[13px]" aria-hidden="true"><path d="M5 0v2.500q7 0 8 7-2.500-3.500-8-3.500v2.500L0 4.200z" fill="currentColor" /></svg></button>
        <button aria-label="Redo" className="text-[#8a8a8b]"><svg viewBox="0 0 13 10" className="h-2.5 w-[13px]" aria-hidden="true"><path d="M8 0v2.500q-7 0-8 7Q2.500 6 8 6v2.500l5-4.300z" fill="currentColor" /></svg></button>
      </div>
      <p className="mt-[15px] text-base leading-5 text-[#d5d5d5]">JL AUDIO</p>
      <p className="text-base font-light leading-5 text-[#d5d5d5]">TüN</p>
      <p className="mt-[3px] text-xs leading-5">Project: Matt's Desk</p>
      <button className="mt-2.5 h-7 w-[159px] rounded-[3px] border-2 border-[#3d8a18] bg-black text-[13px] font-bold leading-6 text-[#3f8f1c]">MV800/8i</button>
      <div className="mt-3 flex gap-[26px]">
        <Knob arc="#8a8a8b" dot="#ea932e" />
        <Knob arc="#ea932e" dot="#8a8a8b" />
      </div>
      <div className="mt-6 flex h-[164px] items-center justify-center gap-2">
        <div className="flex h-full"><Fader label="Master level" value={100} /></div>
        <hr className="w-[17px] border-[#8a8a8a]" />
        <div className="flex h-full"><Fader label="Sub level" value={80} /></div>
      </div>
      <div className="mt-[180px] flex items-center gap-[21px]">
        <hr className="w-[25px] border-[#7d7d7d]" />
        <button aria-label="Mute all"><Speaker className="size-[26px]" /></button>
        <hr className="w-[25px] border-[#7d7d7d]" />
      </div>
      <div className="mt-[3px] flex w-[108px] flex-col rounded-[2px] border border-[#8a8a8a] text-xs font-medium">
        <button className="h-[21px]">Targets</button>
        <button className="h-[22px] bg-[#ea932e] text-[#1c1c1c]">Outputs</button>
      </div>
      <ul className="mt-auto w-[100px] divide-y divide-[#8a8a8a] rounded-t-[3px] border border-[#8a8a8a] text-xs font-medium">
        {CHANNELS.map((c, i) => (
          <li key={c} className={`flex items-center justify-end pr-[3px] ${c === "E/F" ? "h-[58px]" : "h-[29px]"} ${c === "G" ? "bg-[#ea932e]" : ""}`}>
            <button className={i > 6 ? "mr-[9px]" : "mr-[13px]"}>{c}</button>
            <button aria-label={`Mute ${c}`}><Speaker className="size-[19px]" /></button>
            <span className={`ml-[7px] size-3.5 rounded-full ${i < 5 ? "bg-[#a5a5a7]" : i === 5 ? "bg-[#e88a28]" : "bg-black"}`} />
          </li>
        ))}
      </ul>
    </aside>
  );
}

export default function App() {
  return (
    <div className="min-h-screen overflow-hidden bg-[#fafafa] pb-[15px] pt-2.5 [font-family:Inter,sans-serif]">
      <main className="flex min-h-[1055px] overflow-hidden rounded-[14px] bg-[#353637] shadow-[0_14px_24px_rgba(0,0,0,0.5)]">
        <div className="flex min-w-0 flex-1 flex-col">
          <header className="flex h-[50px] items-center pb-[1px]">
            <div className="mb-[22px] ml-[7px] flex gap-2">
              <button aria-label="Close" className="flex size-3 items-center justify-center rounded-full bg-[#ed6a5e]"><span className="size-1 rounded-full bg-[#7a0d06]" /></button>
              <button aria-label="Minimize" className="size-3 rounded-full bg-[#f5bf4f]" />
              <button aria-label="Zoom window" className="size-3 rounded-full bg-[#61c554]" />
            </div>
            <button className="ml-[23px] flex h-6 w-[90px] items-center rounded-[2px] bg-[#dd9535] pl-[7px] text-xs font-bold text-black">
              <span className="mr-[3px] size-[9px] shrink-0 rounded-full border border-[#7d2a14] bg-[#e2301c]" />
              <span className="whitespace-nowrap">PRESET 1</span>
              <span className="ml-auto mr-[3px] flex h-[18px] items-center border-l border-[#4a3518] pl-0.5"><Caret className="w-[7px] text-[#4a3a20]" /></span>
            </button>
            <span className="ml-7 h-[22px] w-1 bg-[#7b7a6e]" />
            <button aria-label="Add preset" className="ml-[29px] flex size-6 items-center justify-center rounded-[4px] bg-[#5c5a5b]">
              <svg viewBox="0 0 14 14" className="size-3.5" aria-hidden="true"><path d="M7 0v14M0 7h14" stroke="#d5d5d5" strokeWidth="4.500" /></svg>
            </button>
          </header>
          <div className="flex flex-1">
            <LeftRail />
            <div className="flex min-w-0 flex-1 flex-col gap-1.5">
              <TopPanel />
              <ScopePanel />
              <RtaPanel />
              <BottomRow />
            </div>
          </div>
        </div>
        <RightRail />
      </main>
    </div>
  );
}
